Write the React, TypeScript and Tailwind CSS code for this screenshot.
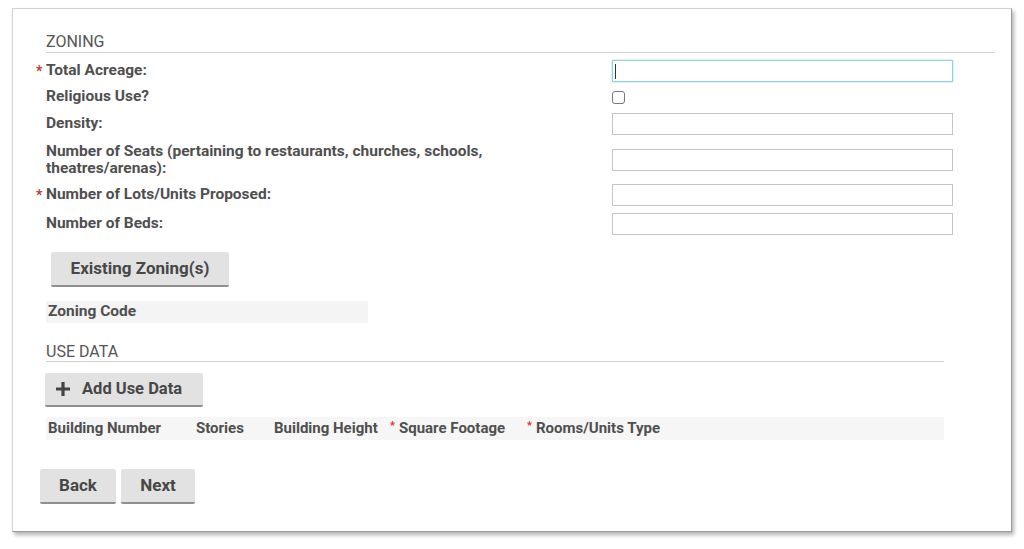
import { useState } from 'react';

const font = { fontFamily: 'Roboto, "Liberation Sans", sans-serif' };

function Star() {
  return <span className="text-[#c0392b] text-[14px] leading-none mr-[2px] -ml-[10px] w-[8px]">*</span>;
}

function Field({ focused = false }: { focused?: boolean }) {
  return (
    <div
      className={
        'relative w-[341px] h-[22px] bg-white ' +
        (focused ? 'border border-[#8ed2ea] shadow-[0_0_2px_rgba(102,190,225,0.6)]' : 'border border-[#c4c4c4]')
      }
    >
      {focused && <span className="absolute left-[2px] top-[3px] h-[15px] w-[1px] bg-[#333]" />}
    </div>
  );
}

function GrayButton({ children, className = '' }: { children: React.ReactNode; className?: string }) {
  return (
    <button
      className={
        'flex items-center bg-[#e2e2e2] text-[#474747] font-bold rounded-[2px] border-b-2 border-[#8f8f8f] ' + className
      }
    >
      {children}
    </button>
  );
}

export default function App() {
  const [religious, setReligious] = useState(false);

  return (
    <div className="w-[1024px] h-[549px] bg-white overflow-hidden pt-[8px] pl-[12px]" style={font}>
      <div className="w-[1000px] h-[524px] bg-white border border-[#d2d2d2] border-r-[#9a9a9a] border-b-[#9a9a9a] shadow-[2px_3px_4px_rgba(0,0,0,0.3)] pt-[23px] pl-[33px] pr-[16px]">
        {/* Zoning */}
        <div className="h-[21px] border-b border-[#cfcfcf] text-[16px] leading-[19px] text-[#555]">ZONING</div>

        <div className="flex items-center h-[23px] mt-[6px]">
          <div className="w-[566px] flex items-center text-[15.5px] font-bold text-[#4f4f4f]">
            <Star />
            Total Acreage:
          </div>
          <Field focused />
        </div>

        <div className="flex items-center h-[14px] mt-[8px]">
          <div className="w-[566px] text-[15.5px] font-bold text-[#4f4f4f]">Religious Use?</div>
          <input
            type="checkbox"
            checked={religious}
            onChange={() => setReligious(!religious)}
            className="appearance-none w-[13px] h-[13px] border border-[#777] rounded-[3px] bg-white m-0"
          />
        </div>

        <div className="flex items-center h-[22px] mt-[9px]">
          <div className="w-[566px] text-[15.5px] font-bold text-[#4f4f4f]">Density:</div>
          <Field />
        </div>

        <div className="flex items-center h-[34px] mt-[8px]">
          <div className="w-[566px] text-[15.5px] leading-[17px] font-bold text-[#4f4f4f]">
            <div className="w-[480px]">Number of Seats (pertaining to restaurants, churches, schools, theatres/arenas):</div>
          </div>
          <Field />
        </div>

        <div className="flex items-center h-[22px] mt-[7px]">
          <div className="w-[566px] flex items-center text-[15.5px] font-bold text-[#4f4f4f]">
            <Star />
            Number of Lots/Units Proposed:
          </div>
          <Field />
        </div>

        <div className="flex items-center h-[22px] mt-[7px]">
          <div className="w-[566px] text-[15.5px] font-bold text-[#4f4f4f]">Number of Beds:</div>
          <Field />
        </div>

        <GrayButton className="mt-[17px] ml-[5px] w-[178px] h-[35px] justify-center text-[17px]">Existing Zoning(s)</GrayButton>

        <div className="mt-[14px] w-[322px] h-[22px] bg-[#f4f4f4] flex items-center pl-[2px] text-[15.5px] font-bold text-[#4f4f4f]">
          Zoning Code
        </div>

        {/* Use data */}
        <div className="mt-[19px] w-[898px] h-[20px] border-b border-[#cfcfcf] text-[16px] leading-[19px] text-[#555]">USE DATA</div>

        <GrayButton className="mt-[11px] -ml-[1px] w-[158px] h-[34px] pl-[10px] gap-[11px] text-[16.5px]">
          <svg width="16" height="16" viewBox="0 0 16 16" className="text-[#444]">
            <path d="M8 1v14M1 8h14" stroke="currentColor" strokeWidth="3.2" />
          </svg>
          Add Use Data
        </GrayButton>

        <div className="mt-[10px] w-[898px] h-[23px] bg-[#f6f6f6] flex items-center text-[15px] font-bold text-[#4f4f4f] pl-[2px]">
          <span className="w-[148px]">Building Number</span>
          <span className="w-[78px]">Stories</span>
          <span className="w-[116px]">Building Height</span>
          <span className="flex items-center w-[137px]">
            <span className="text-[#e0262b] text-[11px] leading-none mr-[4px] -mt-[6px]">*</span>Square Footage
          </span>
          <span className="flex items-center">
            <span className="text-[#e0262b] text-[11px] leading-none mr-[4px] -mt-[6px]">*</span>Rooms/Units Type
          </span>
        </div>

        <div className="mt-[29px] -ml-[6px] flex gap-[5px]">
          <GrayButton className="w-[76px] h-[35px] justify-center text-[17px]">Back</GrayButton>
          <GrayButton className="w-[74px] h-[35px] justify-center text-[17px]">Next</GrayButton>
        </div>
      </div>
    </div>
  );
}
